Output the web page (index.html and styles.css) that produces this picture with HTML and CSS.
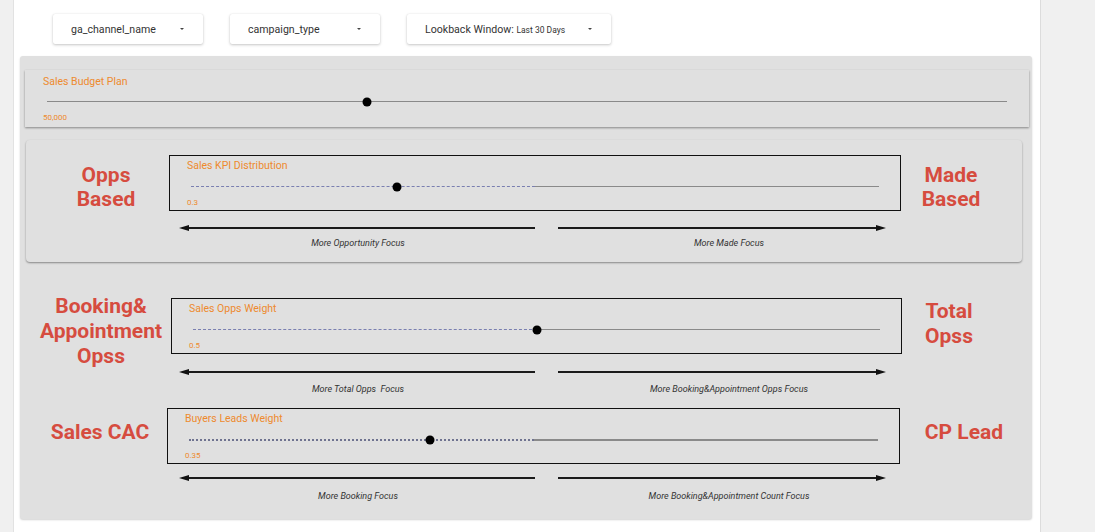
FILE: index.html
```html
<!DOCTYPE html>
<html>
<head>
<meta charset="utf-8">
<link rel="stylesheet" href="styles.css">
</head>
<body>
<div class="page">
  <div class="side side-left"></div>
  <div class="main">
    <div class="filters">
      <div class="dropdown dd-1"><span class="dd-text">ga_channel_name</span><span class="caret"></span></div>
      <div class="dropdown dd-2"><span class="dd-text">campaign_type</span><span class="caret"></span></div>
      <div class="dropdown dd-3"><span class="dd-text">Lookback Window: <span class="dd-small">Last 30 Days</span></span><span class="caret"></span></div>
    </div>

    <div class="panel">
      <div class="card card-budget">
        <div class="slider">
          <div class="s-label">Sales Budget Plan</div>
          <div class="track">
            <div class="seg-solid" style="left:0%;width:100%"></div>
            <div class="thumb" style="left:33.3%"></div>
          </div>
          <div class="s-value">50,000</div>
        </div>
      </div>

      <div class="card card-kpi">
        <div class="section sec-2">
          <div class="side-label left-label">Opps<br>Based</div>
          <div class="middle">
            <div class="box slider">
              <div class="s-label">Sales KPI Distribution</div>
              <div class="track">
                <div class="seg-dashed" style="width:50%"></div>
                <div class="seg-solid" style="left:50%;width:50%"></div>
                <div class="thumb" style="left:30%"></div>
              </div>
              <div class="s-value">0.3</div>
            </div>
            <div class="arrows">
              <div class="arrow arrow-left"><span class="head head-left"></span><span class="shaft"></span></div>
              <div class="arrow arrow-right"><span class="shaft"></span><span class="head head-right"></span></div>
            </div>
            <div class="captions">
              <div class="cap cap-left">More Opportunity Focus</div>
              <div class="cap cap-right">More Made Focus</div>
            </div>
          </div>
          <div class="side-label right-label">Made<br>Based</div>
        </div>
      </div>

      <div class="section sec-3">
        <div class="side-label left-label">Booking&amp;<br>Appointment<br>Opss</div>
        <div class="middle">
          <div class="box slider">
            <div class="s-label">Sales Opps Weight</div>
            <div class="track">
              <div class="seg-dashed" style="width:50%"></div>
              <div class="seg-solid" style="left:50%;width:50%"></div>
              <div class="thumb" style="left:50%"></div>
            </div>
            <div class="s-value">0.5</div>
          </div>
          <div class="arrows">
            <div class="arrow arrow-left"><span class="head head-left"></span><span class="shaft"></span></div>
            <div class="arrow arrow-right"><span class="shaft"></span><span class="head head-right"></span></div>
          </div>
          <div class="captions">
            <div class="cap cap-left">More Total Opps&nbsp; Focus</div>
            <div class="cap cap-right">More Booking&amp;Appointment Opps Focus</div>
          </div>
        </div>
        <div class="side-label right-label">Total<br>Opss</div>
      </div>

      <div class="section sec-4">
        <div class="side-label left-label">Sales CAC</div>
        <div class="middle">
          <div class="box slider thick">
            <div class="s-label">Buyers Leads Weight</div>
            <div class="track">
              <div class="seg-dashed" style="width:50%"></div>
              <div class="seg-solid" style="left:50%;width:50%"></div>
              <div class="thumb" style="left:35%"></div>
            </div>
            <div class="s-value">0.35</div>
          </div>
          <div class="arrows">
            <div class="arrow arrow-left"><span class="head head-left"></span><span class="shaft"></span></div>
            <div class="arrow arrow-right"><span class="shaft"></span><span class="head head-right"></span></div>
          </div>
          <div class="captions">
            <div class="cap cap-left">More Booking Focus</div>
            <div class="cap cap-right">More Booking&amp;Appointment Count Focus</div>
          </div>
        </div>
        <div class="side-label right-label">CP Lead</div>
      </div>
    </div>
  </div>
  <div class="side side-right"></div>
</div>
</body>
</html>
```
FILE: styles.css
```css
html, body {
  margin: 0;
  padding: 0;
  background: #ffffff;
  font-family: Roboto, "Liberation Sans", Arial, sans-serif;
  color: #333;
}

.page {
  display: flex;
  width: 1095px;
  height: 532px;
  overflow: hidden;
}

.side {
  background: #f0f0f0;
}
.side-left {
  width: 13px;
  border-right: 1px solid #e2e2e2;
  flex: 0 0 auto;
}
.side-right {
  flex: 1 1 auto;
  border-left: 1px solid #dcdcdc;
}

.main {
  width: 1026px;
  flex: 0 0 auto;
  background: #ffffff;
  padding-top: 14px;
  box-sizing: border-box;
}

/* filters */
.filters {
  display: flex;
  gap: 27px;
  padding-left: 39px;
}
.dropdown {
  height: 30px;
  background: #fff;
  box-shadow: 0 1px 3px rgba(0,0,0,0.22), 0 0 1px rgba(0,0,0,0.12);
  border-radius: 2px;
  display: flex;
  align-items: center;
  justify-content: space-between;
  padding: 0 19px 0 18px;
  box-sizing: border-box;
  font-size: 10.6px;
  color: #333;
}
.dd-1, .dd-2 { width: 150px; }
.dd-3 { width: 204px; }
.dd-small { font-size: 8.5px; }
.caret {
  width: 0;
  height: 0;
  border-left: 2px solid transparent;
  border-right: 2px solid transparent;
  border-top: 2.5px solid #444;
}

/* panel */
.panel {
  margin: 12px 0 0 6px;
  width: 1012px;
  background: #e0e0e0;
  padding: 14px 0 17px 0;
  box-sizing: border-box;
  border-radius: 3px;
  box-shadow: 0 1px 2px rgba(0,0,0,0.18);
}

.card {
  background: #e0e0e0;
  box-shadow: 0 1px 2px rgba(0,0,0,0.4);
}
.card-budget {
  margin-left: 5px;
  width: 1004px;
  height: 57px;
  box-sizing: border-box;
}
.card-kpi {
  margin: 13px 0 0 6px;
  width: 996px;
  border-radius: 4px;
  padding: 15px 0 13px 0;
  box-sizing: border-box;
}

/* slider */
.slider {
  padding: 5px 22px 4px 18px;
  box-sizing: border-box;
}
.s-label {
  font-size: 10.5px;
  line-height: 14px;
  color: #ee8a2e;
}
.track {
  position: relative;
  height: 16px;
  margin-top: 5px;
  margin-left: 4px;
}
.seg-solid {
  position: absolute;
  top: 7px;
  border-top: 1px solid #8a8a8a;
}
.seg-dashed {
  position: absolute;
  left: 0;
  top: 7px;
  border-top: 1px dashed #7a7fb0;
}
.thumb {
  position: absolute;
  top: 8px;
  width: 9px;
  height: 9px;
  border-radius: 50%;
  background: #000;
  transform: translate(-50%, -50%);
}
.s-value {
  margin-top: 3px;
  font-size: 8px;
  line-height: 10px;
  color: #ee8a2e;
}

.box {
  border: 1px solid #111;
  height: 56px;
  padding: 3px 21px 2px 17px;
}
.box .track { margin-top: 6px; }

.thick .seg-solid { border-top: 2px solid #8a8a8a; top: 7px; }
.thick .seg-dashed { border-top: 2px dotted #6f7390; top: 7px; }

/* sections */
.section {
  display: flex;
  align-items: flex-start;
}
.side-label {
  box-sizing: border-box;
  text-align: center;
  font-weight: 700;
  font-size: 21px;
  line-height: 24px;
  color: #d64c3f;
  flex: 0 0 auto;
}
.middle {
  flex: 0 0 auto;
}

.arrows {
  display: flex;
  gap: 23px;
  height: 10px;
  align-items: center;
}
.arrow {
  display: flex;
  align-items: center;
  height: 10px;
}
.arrow-left { width: 356px; }
.arrow-right { width: 328px; }
.shaft {
  flex: 1 1 auto;
  height: 2px;
  background: #1a1a1a;
}
.head {
  width: 0;
  height: 0;
  border-top: 3.5px solid transparent;
  border-bottom: 3.5px solid transparent;
}
.head-left { border-right: 10px solid #111; }
.head-right { border-left: 10px solid #111; }

.captions {
  display: flex;
  gap: 23px;
}
.cap {
  font-size: 9px;
  line-height: 12px;
  font-style: italic;
  color: #333;
  text-align: center;
}
.cap-left { width: 356px; padding-left: 2px; box-sizing: border-box; }
.cap-right { width: 328px; padding-left: 14px; box-sizing: border-box; }

/* section 2 */
.sec-2 .left-label { width: 143px; padding-left: 17px; margin-top: 8px; }
.sec-2 .box { width: 732px; }
.sec-2 .right-label { width: 121px; padding-right: 21px; margin-top: 8px; }
.sec-2 .arrows { margin: 12px 0 0 10px; }
.sec-2 .captions { margin: 4px 0 0 10px; }

/* section 3 */
.sec-3 { margin-top: 36px; }
.sec-3 .side-label { line-height: 25px; }
.sec-3 .left-label { width: 151px; padding-left: 11px; margin-top: -4px; }
.sec-3 .box { width: 731px; }
.sec-3 .right-label { width: 130px; padding-right: 36px; margin-top: 1px; }
.sec-3 .arrows { margin: 13px 0 0 8px; }
.sec-3 .captions { margin: 6px 0 0 8px; }

/* section 4 */
.sec-4 { margin-top: 13px; }
.sec-4 .left-label { width: 147px; padding-left: 13px; margin-top: 12px; }
.sec-4 .box { width: 733px; }
.sec-4 .right-label { width: 132px; padding-right: 4px; margin-top: 12px; }
.sec-4 .arrows { margin: 9px 0 0 12px; }
.sec-4 .captions { margin: 7px 0 0 12px; }
```
